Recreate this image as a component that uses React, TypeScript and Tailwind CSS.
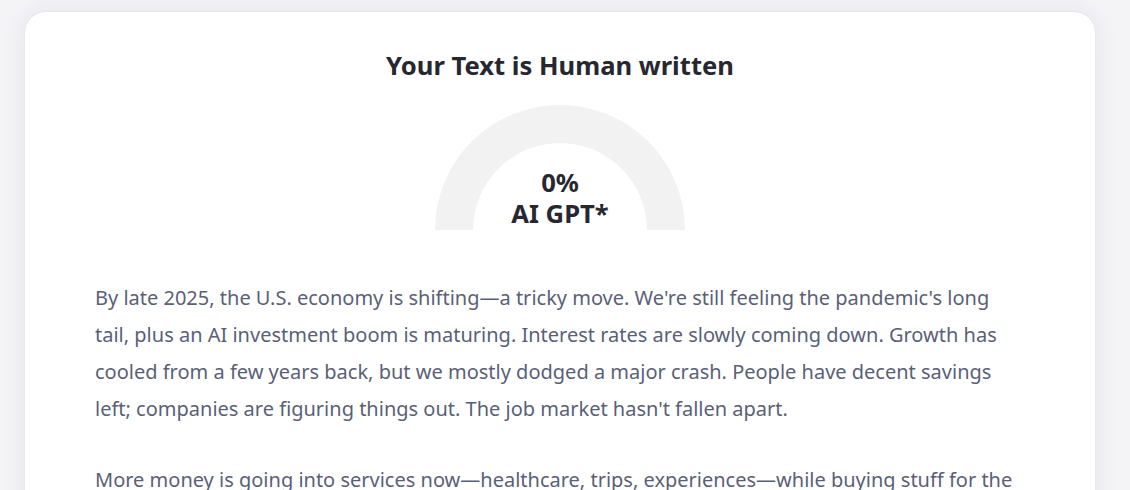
import React from "react";

const paragraphs = [
  "By late 2025, the U.S. economy is shifting—a tricky move. We're still feeling the pandemic's long tail, plus an AI investment boom is maturing. Interest rates are slowly coming down. Growth has cooled from a few years back, but we mostly dodged a major crash. People have decent savings left; companies are figuring things out. The job market hasn't fallen apart.",
  "More money is going into services now—healthcare, trips, experiences—while buying stuff for the home has slowed. Businesses are still spending on software and automation, and hiring is steady but picky.",
];

// Half-donut gauge, 0% filled
const Gauge = ({ percent }: { percent: number }) => {
  return (
    <div className="relative w-[250px] h-[125px]">
      <svg width="250" height="125" viewBox="0 0 250 125" className="block">
        <path
          d="M 0 125 A 125 125 0 0 1 250 125 L 212 125 A 87 87 0 0 0 38 125 Z"
          fill="#f2f2f2"
        />
      </svg>
      <div className="absolute inset-x-0 bottom-[1px] flex flex-col items-center text-[25.6px] leading-[31px] font-bold text-[#262730]">
        <span>{percent}%</span>
        <span>AI GPT*</span>
      </div>
    </div>
  );
};

export default function App() {
  return (
    <div
      className="min-h-screen bg-[#f4f4f7] pt-[11px] pl-[24px] pr-[34px] overflow-hidden"
      style={{ fontFamily: '"Noto Sans", "Open Sans", sans-serif' }}
    >
      <div className="bg-white rounded-t-[22px] border border-[#e6e5f0] shadow-[0_0_24px_rgba(40,40,90,0.07)] min-h-[520px] pt-[37px] px-[70px]">
        <h2 className="text-center text-[25.6px] leading-[34px] font-bold text-[#262730]">
          Your Text is Human written
        </h2>
        <div className="flex justify-center mt-[22px]">
          <Gauge percent={0} />
        </div>
        <div className="mt-[49px] mr-[5px] flex flex-col gap-[34px]">
          {paragraphs.map((p, i) => (
            <p key={i} className="text-[20px] leading-[37px] text-[#5a5f78]">
              {p}
            </p>
          ))}
        </div>
      </div>
    </div>
  );
}
